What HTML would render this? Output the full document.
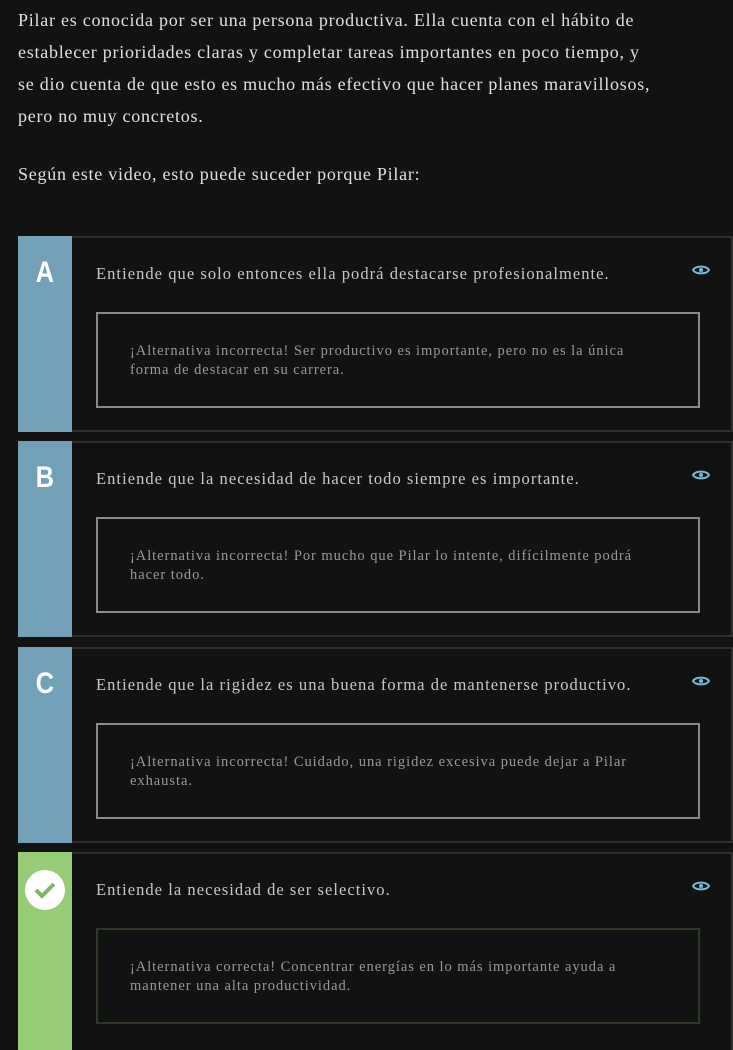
<!DOCTYPE html>
<html><head><meta charset="utf-8"><style>
body{margin:0;background:#121212;width:733px;height:1048px;overflow:hidden;font-family:"Liberation Serif",serif;}
.p{position:absolute;left:18px;width:715px;color:#e0e0e0;font-size:18px;line-height:32px;margin:0;letter-spacing:0.75px;white-space:nowrap}
.card{position:absolute;left:18px;width:713px;height:192px;border:2px solid #2e2e2e;border-left:none;background:#121212}
.bar{position:absolute;left:0;top:-2px;width:54px;height:196px;background:#72a0b8;color:#fff;font-family:"Liberation Sans",sans-serif;font-weight:bold;font-size:30px;text-align:center;line-height:74px}
.bar span{display:inline-block;transform:scaleX(0.85)}
.t{position:absolute;left:78px;top:26px;color:#c8c8c8;font-size:16.5px;letter-spacing:1.05px;white-space:nowrap}
.eye{position:absolute;left:674px;top:25px}
.box{position:absolute;left:78px;top:74px;width:600px;height:92px;border:2px solid #8a8a8a}
.box div{position:absolute;left:32px;top:28px;width:560px;color:#999;font-size:14.5px;line-height:19px;letter-spacing:0.95px;white-space:nowrap}
</style></head><body>
<p class="p" style="top:4px">Pilar es conocida por ser una persona productiva. Ella cuenta con el hábito de<br>establecer prioridades claras y completar tareas importantes en poco tiempo, y<br>se dio cuenta de que esto es mucho más efectivo que hacer planes maravillosos,<br>pero no muy concretos.</p>
<p class="p" style="top:158px">Según este video, esto puede suceder porque Pilar:</p>

<div class="card" style="top:236px"><div class="bar"><span>A</span></div><div class="t">Entiende que solo entonces ella podrá destacarse profesionalmente.</div>
<svg class="eye" width="18" height="14" viewBox="0 0 18 14"><path d="M1 7C3.5 2.5 14.5 2.5 17 7C14.5 11.5 3.5 11.5 1 7Z" fill="none" stroke="#7ab8dc" stroke-width="2"/><circle cx="9" cy="7" r="2" fill="#7ab8dc"/></svg>
<div class="box"><div>¡Alternativa incorrecta! Ser productivo es importante, pero no es la única<br>forma de destacar en su carrera.</div></div></div>

<div class="card" style="top:441px"><div class="bar"><span>B</span></div><div class="t">Entiende que la necesidad de hacer todo siempre es importante.</div>
<svg class="eye" width="18" height="14" viewBox="0 0 18 14"><path d="M1 7C3.5 2.5 14.5 2.5 17 7C14.5 11.5 3.5 11.5 1 7Z" fill="none" stroke="#7ab8dc" stroke-width="2"/><circle cx="9" cy="7" r="2" fill="#7ab8dc"/></svg>
<div class="box"><div>¡Alternativa incorrecta! Por mucho que Pilar lo intente, difícilmente podrá<br>hacer todo.</div></div></div>

<div class="card" style="top:647px"><div class="bar"><span>C</span></div><div class="t">Entiende que la rigidez es una buena forma de mantenerse productivo.</div>
<svg class="eye" width="18" height="14" viewBox="0 0 18 14"><path d="M1 7C3.5 2.5 14.5 2.5 17 7C14.5 11.5 3.5 11.5 1 7Z" fill="none" stroke="#7ab8dc" stroke-width="2"/><circle cx="9" cy="7" r="2" fill="#7ab8dc"/></svg>
<div class="box"><div>¡Alternativa incorrecta! Cuidado, una rigidez excesiva puede dejar a Pilar<br>exhausta.</div></div></div>

<div class="card" style="top:852px;height:196px;border-bottom:none"><div class="bar" style="background:#95cc75;height:198px"><svg width="40" height="40" viewBox="0 0 40 40" style="position:absolute;left:7px;top:18px"><circle cx="20" cy="20" r="20" fill="#fff"/><path d="M11 20l6 6 12-12" fill="none" stroke="#7fb865" stroke-width="4"/></svg></div><div class="t">Entiende la necesidad de ser selectivo.</div>
<svg class="eye" width="18" height="14" viewBox="0 0 18 14"><path d="M1 7C3.5 2.5 14.5 2.5 17 7C14.5 11.5 3.5 11.5 1 7Z" fill="none" stroke="#7ab8dc" stroke-width="2"/><circle cx="9" cy="7" r="2" fill="#7ab8dc"/></svg>
<div class="box" style="border-color:#2a3a26"><div>¡Alternativa correcta! Concentrar energías en lo más importante ayuda a<br>mantener una alta productividad.</div></div></div>
</body></html>
